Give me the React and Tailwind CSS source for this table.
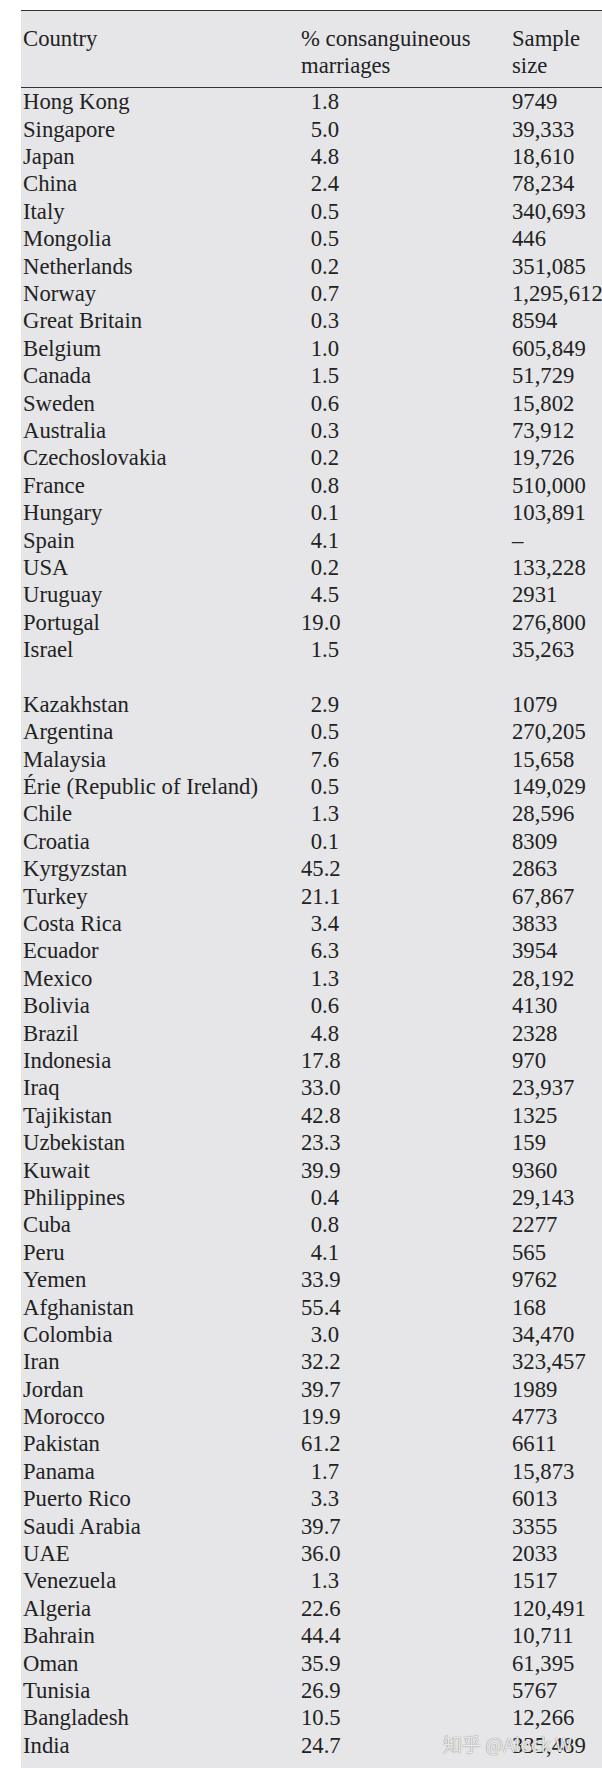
const rows = [
  ['Hong Kong', '1.8', '9749'],
  ['Singapore', '5.0', '39,333'],
  ['Japan', '4.8', '18,610'],
  ['China', '2.4', '78,234'],
  ['Italy', '0.5', '340,693'],
  ['Mongolia', '0.5', '446'],
  ['Netherlands', '0.2', '351,085'],
  ['Norway', '0.7', '1,295,612'],
  ['Great Britain', '0.3', '8594'],
  ['Belgium', '1.0', '605,849'],
  ['Canada', '1.5', '51,729'],
  ['Sweden', '0.6', '15,802'],
  ['Australia', '0.3', '73,912'],
  ['Czechoslovakia', '0.2', '19,726'],
  ['France', '0.8', '510,000'],
  ['Hungary', '0.1', '103,891'],
  ['Spain', '4.1', '–'],
  ['USA', '0.2', '133,228'],
  ['Uruguay', '4.5', '2931'],
  ['Portugal', '19.0', '276,800'],
  ['Israel', '1.5', '35,263'],
  null,
  ['Kazakhstan', '2.9', '1079'],
  ['Argentina', '0.5', '270,205'],
  ['Malaysia', '7.6', '15,658'],
  ['Érie (Republic of Ireland)', '0.5', '149,029'],
  ['Chile', '1.3', '28,596'],
  ['Croatia', '0.1', '8309'],
  ['Kyrgyzstan', '45.2', '2863'],
  ['Turkey', '21.1', '67,867'],
  ['Costa Rica', '3.4', '3833'],
  ['Ecuador', '6.3', '3954'],
  ['Mexico', '1.3', '28,192'],
  ['Bolivia', '0.6', '4130'],
  ['Brazil', '4.8', '2328'],
  ['Indonesia', '17.8', '970'],
  ['Iraq', '33.0', '23,937'],
  ['Tajikistan', '42.8', '1325'],
  ['Uzbekistan', '23.3', '159'],
  ['Kuwait', '39.9', '9360'],
  ['Philippines', '0.4', '29,143'],
  ['Cuba', '0.8', '2277'],
  ['Peru', '4.1', '565'],
  ['Yemen', '33.9', '9762'],
  ['Afghanistan', '55.4', '168'],
  ['Colombia', '3.0', '34,470'],
  ['Iran', '32.2', '323,457'],
  ['Jordan', '39.7', '1989'],
  ['Morocco', '19.9', '4773'],
  ['Pakistan', '61.2', '6611'],
  ['Panama', '1.7', '15,873'],
  ['Puerto Rico', '3.3', '6013'],
  ['Saudi Arabia', '39.7', '3355'],
  ['UAE', '36.0', '2033'],
  ['Venezuela', '1.3', '1517'],
  ['Algeria', '22.6', '120,491'],
  ['Bahrain', '44.4', '10,711'],
  ['Oman', '35.9', '61,395'],
  ['Tunisia', '26.9', '5767'],
  ['Bangladesh', '10.5', '12,266'],
  ['India', '24.7', '335,489'],
]

function Row({ row }) {
  if (!row) return <div className="h-[27.4px]" />
  return (
    <div className="grid grid-cols-[278px_211px_1fr] h-[27.4px] leading-[27.4px]">
      <div className="whitespace-nowrap">{row[0]}</div>
      <div className="w-[38px] text-right whitespace-nowrap">{row[1]}</div>
      <div className="whitespace-nowrap">{row[2]}</div>
    </div>
  )
}

export default function App() {
  return (
    <div className="w-[602px] h-[1768px] bg-white pt-[10px] pl-[21px] font-['Liberation_Serif',serif] text-[22.7px] text-[#222]">
      <div className="relative h-full bg-[#e6e6e8] border-t-[1.5px] border-[#333]">
        <div className="pl-[2px] pt-[13.5px] pb-[8px] border-b-[1.5px] border-[#333] leading-[27.4px]">
          <div className="grid grid-cols-[278px_211px_1fr]">
            <div>Country</div>
            <div className="whitespace-nowrap">% consanguineous<br />marriages</div>
            <div>Sample<br />size</div>
          </div>
        </div>
        <div className="pl-[2px]">
          {rows.map((row, i) => (
            <Row key={i} row={row} />
          ))}
        </div>
        <div className="absolute left-[422px] top-[1721px] text-[19px] leading-[24px] text-white/85 font-['Noto_Sans_CJK_SC','Noto_Sans',sans-serif] [text-shadow:0_0_1px_#555]">
          知乎 @Aleck W
        </div>
      </div>
    </div>
  )
}
